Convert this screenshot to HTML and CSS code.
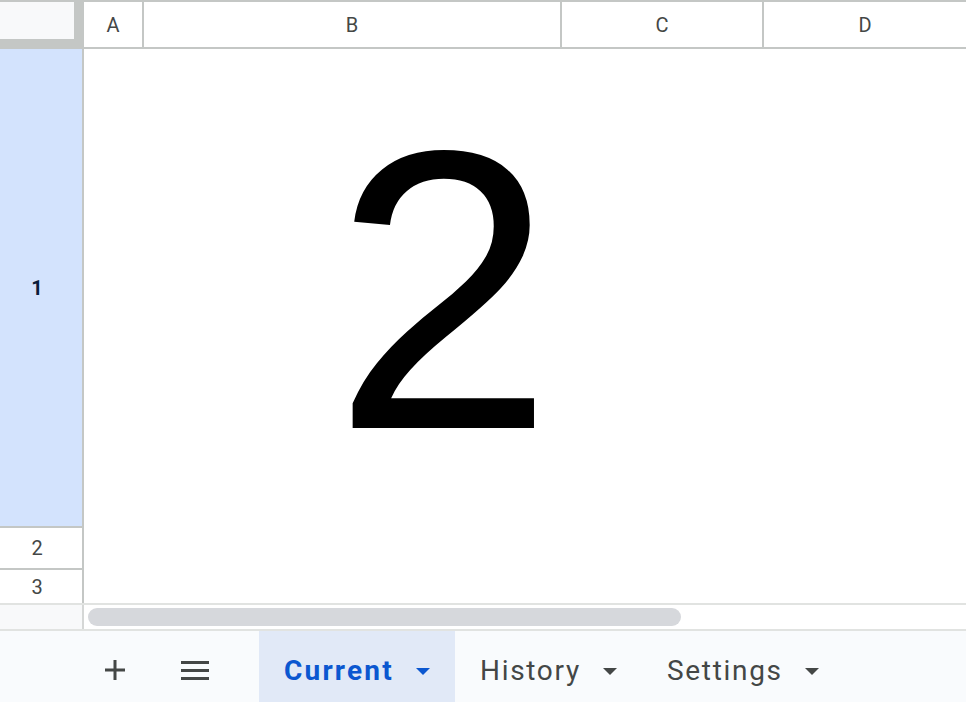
FILE: index.html
```html
<!DOCTYPE html>
<html>
<head>
<meta charset="utf-8">
<link rel="stylesheet" href="styles.css">
</head>
<body>
<div class="app">
  <div class="header">
    <div class="corner"><div class="corner-inner"></div></div>
    <div class="colheads">
      <div class="colhead col-a">A</div>
      <div class="colhead col-b">B</div>
      <div class="colhead col-c">C</div>
      <div class="colhead col-d">D</div>
    </div>
  </div>
  <div class="body">
    <div class="rowheads">
      <div class="rowhead row-1 selected">1</div>
      <div class="rowhead row-2">2</div>
      <div class="rowhead row-3">3</div>
    </div>
    <div class="cells">
      <div class="cell-a"></div>
      <div class="cell-b"><span class="big">2</span></div>
    </div>
  </div>
  <div class="scroll">
    <div class="scroll-left"></div>
    <div class="track"><div class="thumb"></div></div>
  </div>
  <div class="tabbar">
    <div class="iconbtn add">
      <svg width="20" height="20" viewBox="0 0 20 20"><path d="M10 0v20M0 10h20" stroke="#444746" stroke-width="3" fill="none"/></svg>
    </div>
    <div class="iconbtn menu">
      <svg width="28" height="20" viewBox="0 0 28 20"><path d="M0 2.5h28M0 10.5h28M0 18.5h28" stroke="#444746" stroke-width="3" fill="none"/></svg>
    </div>
    <div class="tab active">
      <span class="tab-label">Current</span>
      <svg class="caret" width="14" height="7" viewBox="0 0 14 7"><path d="M0 0h14L7 7z" fill="#0b57d0"/></svg>
    </div>
    <div class="tab">
      <span class="tab-label">History</span>
      <svg class="caret" width="14" height="7" viewBox="0 0 14 7"><path d="M0 0h14L7 7z" fill="#444746"/></svg>
    </div>
    <div class="tab">
      <span class="tab-label">Settings</span>
      <svg class="caret" width="14" height="7" viewBox="0 0 14 7"><path d="M0 0h14L7 7z" fill="#444746"/></svg>
    </div>
  </div>
</div>
</body>
</html>
```
FILE: styles.css
```css
* { box-sizing: border-box; }
html, body { margin: 0; padding: 0; }
body {
  width: 966px;
  height: 702px;
  overflow: hidden;
  background: #ffffff;
  font-family: Roboto, "Liberation Sans", Arial, sans-serif;
}
.app { display: flex; flex-direction: column; height: 702px; }

.header { display: flex; height: 49px; }
.corner {
  width: 84px;
  height: 49px;
  background: #c4c7c5;
  padding-top: 2px;
}
.corner-inner { width: 74px; height: 37px; background: #f8f9fa; }
.colheads {
  flex: 1;
  display: flex;
  border-top: 2px solid #c4c7c5;
  border-bottom: 2px solid #c4c7c5;
}
.colhead {
  display: flex;
  align-items: center;
  justify-content: center;
  font-size: 20px;
  color: #444746;
  background: #fff;
  border-right: 2px solid #c4c7c5;
}
.col-a { width: 60px; }
.col-b { width: 418px; }
.col-c { width: 202px; }
.col-d { flex: 1; border-right: none; }

.body { display: flex; height: 554px; }
.rowheads {
  width: 84px;
  display: flex;
  flex-direction: column;
  border-right: 2px solid #c4c7c5;
}
.rowhead {
  display: flex;
  align-items: center;
  justify-content: center;
  padding-right: 8px;
  font-size: 20px;
  color: #444746;
  background: #fff;
  border-bottom: 2px solid #c4c7c5;
}
.row-1 { height: 479px; }
.row-2 { height: 42px; }
.row-3 { height: 33px; border-bottom: none; }
.selected { background: #d3e3fd; color: #0b1d3a; font-weight: 700; }

.cells { flex: 1; display: flex; }
.cell-a { width: 60px; }
.cell-b {
  width: 416px;
  height: 478px;
  display: flex;
  align-items: center;
  justify-content: flex-end;
  padding-right: 6px;
  padding-top: 3px;
}
.big {
  font-family: "Liberation Sans", Arial, sans-serif;
  font-size: 398px;
  line-height: 1;
  color: #000;
}

.scroll {
  display: flex;
  height: 28px;
  border-top: 2px solid #e1e3e1;
  border-bottom: 2px solid #e1e3e1;
}
.scroll-left {
  width: 84px;
  background: #f8f9fa;
  border-right: 2px solid #d5d7d6;
}
.track { flex: 1; padding: 3px 0 0 4px; }
.thumb {
  width: 593px;
  height: 18px;
  border-radius: 9px;
  background: #d6d8dc;
}

.tabbar {
  flex: 1;
  display: flex;
  background: #f9fbfd;
}
.iconbtn {
  width: 40px;
  display: flex;
  align-items: center;
  justify-content: center;
  padding-top: 7px;
}
.add { margin-left: 95px; }
.menu { margin-left: 40px; margin-right: 44px; }
.tab {
  display: flex;
  align-items: center;
  gap: 22px;
  padding: 7px 25px 0 25px;
  font-size: 28px;
  font-weight: 400;
  letter-spacing: 1.7px;
  color: #444746;
}
.tab.active {
  background: #e1e9f7;
  color: #0b57d0;
  font-weight: 700;
  letter-spacing: 2.2px;
}
.caret { margin-top: 2px; }
```
